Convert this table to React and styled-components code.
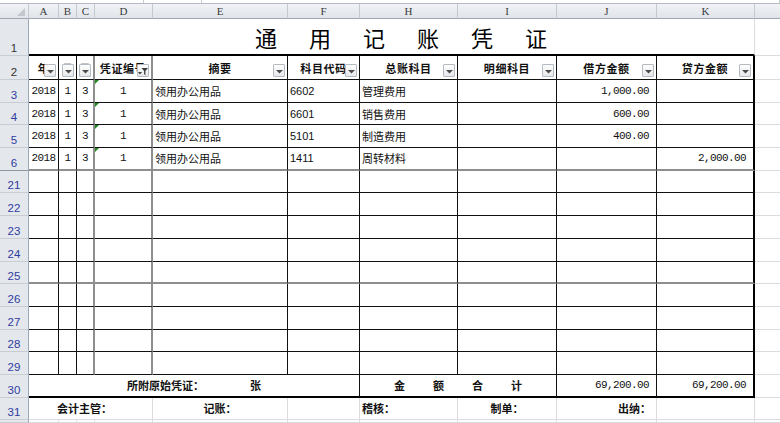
import React from "react";
import styled, { createGlobalStyle } from "styled-components";

const CJK = `"Noto Sans CJK SC", "Liberation Sans", sans-serif`;
const MONO = `"Liberation Mono", "DejaVu Sans Mono", monospace`;
const SANS = `"Liberation Sans", Arial, sans-serif`;

// 边框样式
const LINE = {
  grid: "1px solid #dadcdd",
  line: "1px solid #111",
  soft: "2px solid #8e8e8e",
  thick: "2px solid #000",
  none: "0",
};

const COLS = [
  { key: "A", edge: "line", align: "center", font: "mono" },
  { key: "B", edge: "line", align: "center", font: "mono" },
  { key: "C", edge: "soft", align: "center", font: "mono" },
  { key: "D", edge: "soft", align: "center", font: "mono" },
  { key: "E", edge: "line", align: "left", font: "cjk" },
  { key: "F", edge: "line", align: "left", font: "sans" },
  { key: "H", edge: "line", align: "left", font: "cjk" },
  { key: "I", edge: "line", align: "left", font: "cjk" },
  { key: "J", edge: "line", align: "right", font: "mono", pad: 7 },
  { key: "K", edge: "thick", align: "right", font: "mono", pad: 7 },
];

const HEADERS = {
  A: "年", B: "月", C: "日", D: "凭证编号", E: "摘要",
  F: "科目代码", H: "总账科目", I: "明细科目", J: "借方金额", K: "贷方金额",
};

const ENTRIES = [
  { row: 3, A: "2018", B: "1", C: "3", D: "1", E: "领用办公用品", F: "6602", H: "管理费用", J: "1,000.00" },
  { row: 4, A: "2018", B: "1", C: "3", D: "1", E: "领用办公用品", F: "6601", H: "销售费用", J: "600.00" },
  { row: 5, A: "2018", B: "1", C: "3", D: "1", E: "领用办公用品", F: "5101", H: "制造费用", J: "400.00" },
  { row: 6, A: "2018", B: "1", C: "3", D: "1", E: "领用办公用品", F: "1411", H: "周转材料", K: "2,000.00" },
  ...[21, 22, 23, 24, 25, 26, 27, 28, 29].map(row => ({ row })),
];

const SOFT_ROWS = [6, 25];

export default function App() {
  return (
    <>
      <GlobalStyle />
      <TopStrip>
        <StripSeg $w={143} />
        <StripSeg $w={57} />
        <StripSeg $w={0} $grow />
      </TopStrip>
      <Sheet>
        {/* 列标题 */}
        <Corner>
          <svg width="8" height="8" viewBox="0 0 8 8">
            <polygon points="8,0 8,8 0,8" fill="#c3c8ce" />
          </svg>
        </Corner>
        {COLS.map(col => (
          <ColHead key={col.key}>{col.key}</ColHead>
        ))}
        <ColHead $last />

        {/* 第1行 标题 */}
        <RowHead>1</RowHead>
        <TitleCell $span={10} $b="thick">
          {"通用记账凭证".split("").map(ch => (
            <span key={ch}>{ch}</span>
          ))}
        </TitleCell>
        <Cell $r="none" />

        {/* 第2行 表头 */}
        <RowHead>2</RowHead>
        {COLS.map(col => (
          <Cell key={col.key} $r={col.edge} $b="line" $align="center" $bold $font="cjk" $head>
            {HEADERS[col.key]}
            <FilterButton>
              {col.key === "D" ? (
                <svg width="10" height="9" viewBox="0 0 10 9">
                  <polygon points="0,5 4,5 2,7.5" fill="#3c3c3c" />
                  <path d="M3.5 1h6.5l-2.6 3v4.2l-1.3-.9v-3.3z" fill="#3c3c3c" />
                </svg>
              ) : (
                <svg width="7" height="4" viewBox="0 0 7 4">
                  <polygon points="0,0 7,0 3.5,3.5" fill="#4a4a4a" />
                </svg>
              )}
            </FilterButton>
          </Cell>
        ))}
        <Cell $r="none" />

        {/* 明细行 */}
        {ENTRIES.map(entry => (
          <React.Fragment key={entry.row}>
            <RowHead $blue $mark={entry.row === 6}>{entry.row}</RowHead>
            {COLS.map(col => (
              <Cell
                key={col.key}
                $r={col.edge}
                $b={SOFT_ROWS.includes(entry.row) ? "soft" : "line"}
                $align={col.align}
                $font={col.font}
                $pad={col.pad}
                $flag={col.key === "D" && !!entry.D}
              >
                {entry[col.key]}
              </Cell>
            ))}
            <Cell $r="none" />
          </React.Fragment>
        ))}

        {/* 合计行 */}
        <RowHead $blue>30</RowHead>
        <Cell $span={6} $r="line" $b="thick" $align="center" $bold $font="cjk" $gap={46}>
          <span>所附原始凭证：</span>
          <span>张</span>
        </Cell>
        <Cell $span={2} $r="line" $b="thick" $align="center" $bold $font="cjk" $gap={28} $pad={6}>
          {["金", "额", "合", "计"].map(ch => (
            <span key={ch}>{ch}</span>
          ))}
        </Cell>
        <Cell $r="line" $b="thick" $align="right" $font="mono" $pad={7}>69,200.00</Cell>
        <Cell $r="thick" $b="thick" $align="right" $font="mono" $pad={7}>69,200.00</Cell>
        <Cell $r="none" />

        {/* 签字行 */}
        <RowHead $blue>31</RowHead>
        <Cell $span={4} $bold $font="cjk" $pad={28}>会计主管：</Cell>
        <Cell $align="center" $bold $font="cjk">记账：</Cell>
        <Cell />
        <Cell $bold $font="cjk">稽核：</Cell>
        <Cell $align="center" $bold $font="cjk">制单：</Cell>
        <Cell $align="right" $bold $font="cjk" $pad={5}>出纳：</Cell>
        <Cell />
        <Cell $r="none" />

        {/* 第32行 只露出一点 */}
        <RowHead />
        {COLS.map(col => (
          <Cell key={col.key} />
        ))}
        <Cell $r="none" />
      </Sheet>
    </>
  );
}

const GlobalStyle = createGlobalStyle`
  html, body {
    margin: 0;
    padding: 0;
    background: #fff;
  }
  body {
    font-family: ${SANS};
    overflow: hidden;
  }
`;

const TopStrip = styled.div`
  height: 4px;
  display: flex;
  background: #fff;
  border-bottom: 1px solid #b4bbc4;
  box-sizing: border-box;
`;

const StripSeg = styled.div`
  width: ${p => p.$w}px;
  flex: ${p => (p.$grow ? 1 : "none")};
  border-right: 1px solid #c9cdd3;
`;

const Sheet = styled.div`
  display: grid;
  grid-template-columns: 29px 30px 18px 18px 58px 135px 72px 98px 99px 100px 98px 1fr;
  grid-template-rows: 15px 37px 24px repeat(15, 22.7px) 1fr;
  height: calc(100vh - 4px);
  overflow: hidden;
`;

const ColHead = styled.div`
  box-sizing: border-box;
  background: linear-gradient(#f1f3f5, #e0e4e9);
  border-right: ${p => (p.$last ? "0" : "1px solid #c5cad1")};
  border-bottom: 1px solid #9ea7b3;
  display: flex;
  align-items: center;
  justify-content: center;
  font: 11px "Liberation Serif", "DejaVu Serif", serif;
  color: #3d3d3d;
`;

const Corner = styled(ColHead)`
  align-items: flex-end;
  justify-content: flex-end;
  padding: 0 3px 2px 0;
`;

const RowHead = styled.div`
  box-sizing: border-box;
  background: #e4e7ec;
  border-right: 1px solid #9ea7b3;
  border-bottom: 1px solid ${p => (p.$mark ? "#8d96a3" : "#c8cdd4")};
  display: flex;
  align-items: flex-end;
  justify-content: center;
  padding-bottom: 1px;
  font: 11.5px ${SANS};
  color: ${p => (p.$blue ? "#2f3d9e" : "#333")};
`;

const FONT = { cjk: CJK, mono: MONO, sans: SANS };

const Cell = styled.div`
  position: relative;
  box-sizing: border-box;
  min-width: 0;
  overflow: hidden;
  grid-column: span ${p => p.$span || 1};
  border-right: ${p => LINE[p.$r || "grid"]};
  border-bottom: ${p => LINE[p.$b || "grid"]};
  display: flex;
  align-items: center;
  justify-content: ${p => ({ left: "flex-start", center: "center", right: "flex-end" })[p.$align || "left"]};
  gap: ${p => p.$gap || 0}px;
  padding: 0 ${p => p.$pad ?? 2}px;
  white-space: nowrap;
  color: #111;
  font-family: ${p => FONT[p.$font || "cjk"]};
  font-size: 11px;
  font-weight: ${p => (p.$bold ? 700 : 400)};
  letter-spacing: ${p => (p.$font === "mono" ? "-0.6px" : p.$head ? "0.6px" : "0")};

  ${p =>
    p.$flag &&
    `
    &::before {
      content: "";
      position: absolute;
      left: 0;
      top: 0;
      border-top: 4px solid #1f8a1f;
      border-right: 4px solid transparent;
    }
  `}
`;

const TitleCell = styled(Cell)`
  justify-content: center;
  gap: 32px;
  padding-left: 21px;
  font-size: 22px;
  font-weight: 400;
  color: #000;
`;

const FilterButton = styled.span`
  position: absolute;
  right: 2px;
  bottom: 2px;
  width: 12px;
  height: 13px;
  box-sizing: border-box;
  border: 1px solid #b5bbc3;
  border-radius: 1px;
  background: linear-gradient(#fefefe, #e6e8eb);
  display: flex;
  align-items: center;
  justify-content: center;
  padding-top: 2px;
`;
